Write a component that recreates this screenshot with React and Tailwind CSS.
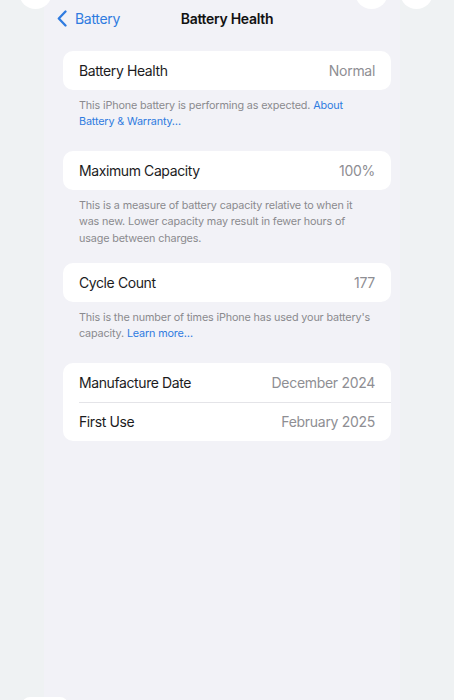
const Row = ({ label, value }) => (
  <div className="flex items-center justify-between h-[38.5px] px-4">
    <span className="text-[14px] tracking-[-0.4px] text-[#1c1c1e]">{label}</span>
    <span className="text-[14px] tracking-[-0.3px] text-[#8e8e93]">{value}</span>
  </div>
);

const Card = ({ children }) => (
  <div className="bg-white rounded-[10px] overflow-hidden">{children}</div>
);

const Footer = ({ children }) => (
  <p className="pl-4 pr-[17px] pt-[8px] text-[10.8px] tracking-[-0.15px] leading-[16.5px] text-[#8a8a8e]">
    {children}
  </p>
);

const Link = ({ children }) => <span className="text-[#2f7be0]">{children}</span>;

export default function App() {
  return (
    <div
      className="relative w-[454px] h-[700px] overflow-hidden bg-[#eff2f3] flex"
      style={{ fontFamily: 'Inter, "Noto Sans", sans-serif' }}
    >
      {/* bits of other windows poking in */}
      <div className="absolute left-[19px] top-[-24px] w-[33px] h-[33px] rounded-full bg-white" />
      <div className="absolute left-[355px] top-[-24px] w-[33px] h-[33px] rounded-full bg-white" />
      <div className="absolute left-[400px] top-[-24px] w-[33px] h-[33px] rounded-full bg-white" />
      <div className="absolute left-[22px] top-[697px] w-[46px] h-[20px] rounded-[8px] bg-white" />

      <div className="ml-[44px] w-[356px] h-full bg-[#f2f2f7] pl-[19px] pr-[9px]">
        {/* Nav bar */}
        <div className="grid grid-cols-[1fr_auto_1fr] items-center h-[37px]">
          <div className="flex items-center ml-[-6px] text-[#2f7be0]">
            <svg width="10" height="17" viewBox="0 0 10 17" fill="none">
              <path
                d="M8.5 1.5 L1.8 8.5 L8.5 15.5"
                stroke="currentColor"
                strokeWidth="2.3"
                strokeLinecap="round"
                strokeLinejoin="round"
              />
            </svg>
            <span className="text-[14px] tracking-[-0.3px] ml-[8px]">Battery</span>
          </div>
          <h1 className="text-[14px] tracking-[-0.3px] font-semibold text-[#111]">Battery Health</h1>
          <div />
        </div>

        <div className="mt-[14px]">
          <Card>
            <Row label="Battery Health" value="Normal" />
          </Card>
          <Footer>
            This iPhone battery is performing as expected. <Link>About Battery &amp; Warranty…</Link>
          </Footer>
        </div>

        <div className="mt-[20.5px]">
          <Card>
            <Row label="Maximum Capacity" value="100%" />
          </Card>
          <Footer>
            This is a measure of battery capacity relative to when it was new. Lower capacity may
            result in fewer hours of usage between charges.
          </Footer>
        </div>

        <div className="mt-[16px]">
          <Card>
            <Row label="Cycle Count" value="177" />
          </Card>
          <Footer>
            This is the number of times iPhone has used your battery's capacity.{' '}
            <Link>Learn more…</Link>
          </Footer>
        </div>

        <div className="mt-[20.5px]">
          <Card>
            <Row label="Manufacture Date" value="December 2024" />
            <div className="ml-4 h-px bg-[#e4e4e8]" />
            <Row label="First Use" value="February 2025" />
          </Card>
        </div>
      </div>
    </div>
  );
}
